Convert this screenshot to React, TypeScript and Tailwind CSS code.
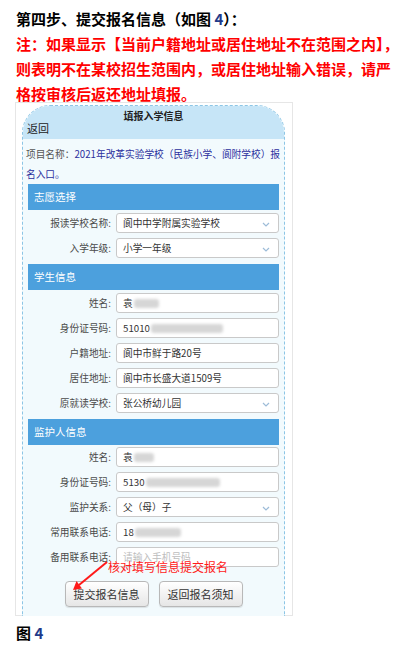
const font = { fontFamily: '"Noto Sans CJK SC", "Noto Sans", sans-serif' };

function Chevron() {
  return (
    <svg width="8" height="5" viewBox="0 0 8 5" className="absolute right-[8px] top-[8px]">
      <path d="M1 1 L4 4 L7 1" fill="none" stroke="#9dbcd8" strokeWidth="1.2" />
    </svg>
  );
}

function Blur({ w }: { w: number }) {
  return <span className="ml-[1px] inline-block h-[9px] rounded-[3px] bg-[#d6d6d6] blur-[1.5px] align-middle" style={{ width: w }} />;
}

function Row({ label, select, children }: { label: string; select?: boolean; children: React.ReactNode }) {
  return (
    <div className="flex h-[20px] items-center gap-[5px]">
      <div className="w-[83px] whitespace-nowrap text-right text-[9.7px] text-[#4a4a4a]">{label}:</div>
      <div className="relative flex h-[20px] flex-1 items-center rounded-[3px] border border-[#c9c9c9] bg-white pl-[6px] text-[9.7px] text-[#333]">
        {children}
        {select ? <Chevron /> : null}
      </div>
    </div>
  );
}

function Section({ title, children }: { title: string; children: React.ReactNode }) {
  return (
    <div className="flex flex-col">
      <div className="flex h-[26px] items-center bg-[#4ca0dd] pl-[6px] text-[10.5px] text-white">{title}</div>
      <div className="flex flex-col gap-[5px] pt-[3px] pb-[6px]">{children}</div>
    </div>
  );
}

export default function App() {
  return (
    <div className="h-[654px] w-[407px] bg-white pl-[16px] pt-[6px]" style={font}>
      <div className="whitespace-nowrap text-[15px] font-bold leading-[25px] text-black">
        第四步、提交报名信息（如图 <span className="text-[#1f3a8a]">4</span>）：
      </div>
      <div className="whitespace-nowrap text-[15px] font-bold leading-[25px] text-[#ff0000]">
        <div>注：如果显示【当前户籍地址或居住地址不在范围之内】，</div>
        <div>则表明不在某校招生范围内，或居住地址输入错误，请严</div>
        <div>格按审核后返还地址填报。</div>
      </div>

      <div className="-mt-[4px] -ml-[1px] h-[514px] w-[278px] border border-[#e6e6e6] bg-white pl-[6px] pr-[7px] pt-[2px]">
        <div className="h-[511px] overflow-hidden rounded-t-[28px] border-x border-t border-dashed border-[#8cc5e5] bg-[#f2fafd]">
          <div className="flex h-[33px] flex-col bg-[#c6e5f7] pt-[4px]">
            <div className="text-center text-[10px] font-bold leading-[12px] text-[#222]">填报入学信息</div>
            <div className="pl-[4px] text-[11px] leading-[12px] text-[#222]">返回</div>
          </div>

          <div className="flex flex-col px-[5px] pt-[5px]">
            <div className="-ml-[2px] whitespace-nowrap text-[9.7px] leading-[20px]">
              <div>
                <span className="text-[#555]">项目名称：</span>
                <span className="text-[#2b2f9e]">2021年改革实验学校（民族小学、阆附学校）报</span>
              </div>
              <div className="text-[#2b2f9e]">名入口。</div>
            </div>

            <Section title="志愿选择">
              <Row label="报读学校名称" select>阆中中学附属实验学校</Row>
              <Row label="入学年级" select>小学一年级</Row>
            </Section>

            <Section title="学生信息">
              <Row label="姓名">
                袁<Blur w={25} />
              </Row>
              <Row label="身份证号码">
                51010<Blur w={72} />
              </Row>
              <Row label="户籍地址">阆中市鲜于路20号</Row>
              <Row label="居住地址">阆中市长盛大道1509号</Row>
              <Row label="原就读学校" select>张公桥幼儿园</Row>
            </Section>

            <div className="flex flex-col">
              <div className="flex h-[26px] items-center bg-[#4ca0dd] pl-[6px] text-[10.5px] text-white">监护人信息</div>
              <div className="flex flex-col gap-[5px] pt-[2px]">
                <Row label="姓名">
                  袁<Blur w={20} />
                </Row>
                <Row label="身份证号码">
                  5130<Blur w={74} />
                </Row>
                <Row label="监护关系" select>父（母）子</Row>
                <Row label="常用联系电话">
                  18<Blur w={46} />
                </Row>
                <Row label="备用联系电话">
                  <span className="text-[#bdbdbd]">请输入手机号码</span>
                </Row>
              </div>
            </div>

            <div className="relative flex justify-center gap-[10px] pt-[14px]">
              <span className="absolute left-[80px] top-[-7px] whitespace-nowrap text-[12px] leading-[14px] text-[#ff1a1a]">
                核对填写信息提交报名
              </span>
              <svg width="44" height="34" viewBox="0 0 44 34" className="absolute left-[39px] top-[-8px]">
                <line x1="40" y1="3" x2="12" y2="26" stroke="#ff1a1a" strokeWidth="2" />
                <polygon points="6,31 15,29.5 9.5,22" fill="#ff1a1a" />
              </svg>
              <button className="h-[26px] w-[84px] rounded-[4px] border border-[#b8b8b8] bg-gradient-to-b from-white to-[#e6e6e6] text-[11px] text-[#333] shadow-[0_1px_1px_rgba(0,0,0,0.1)]">
                提交报名信息
              </button>
              <button className="h-[26px] w-[84px] rounded-[4px] border border-[#b8b8b8] bg-gradient-to-b from-white to-[#e6e6e6] text-[11px] text-[#333] shadow-[0_1px_1px_rgba(0,0,0,0.1)]">
                返回报名须知
              </button>
            </div>
          </div>
        </div>
      </div>

      <div className="mt-[5px] text-[15px] font-bold leading-[24px] text-black">
        图 <span className="text-[#1f3a8a]">4</span>
      </div>
    </div>
  );
}
